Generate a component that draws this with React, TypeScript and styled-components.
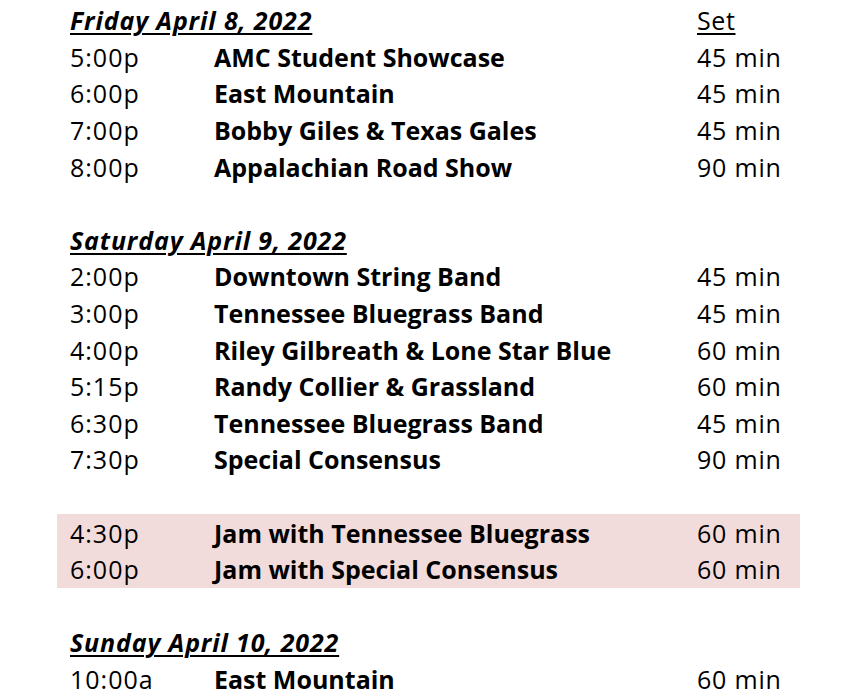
import React from "react"
import styled, { createGlobalStyle } from "styled-components"

const GlobalStyle = createGlobalStyle`
    body {
        margin: 0;
        background: #ffffff;
        font-family: "Open Sans", "Lato", sans-serif;
        color: #000000;
    }
`

const Page = styled.div`
    padding: 2px 50px 0 57px;
    display: flex;
    flex-direction: column;
`

const Row = styled.div<{ $shaded?: boolean }>`
    display: grid;
    grid-template-columns: 144px 483px 1fr;
    width: 743px;
    box-sizing: border-box;
    padding-left: 13px;
    height: 36.6px;
    align-items: center;
    font-size: 25px;
    background-color: ${(p) => (p.$shaded ? "#f2dcdb" : "transparent")};
`

const Heading = styled.span`
    grid-column: 1 / 3;
    font-weight: 700;
    font-style: italic;
    letter-spacing: 0.85px;
    text-decoration: underline;
    text-underline-offset: 3px;
    text-decoration-thickness: 2px;
`

const SetLabel = styled.span`
    letter-spacing: 0.6px;
    text-decoration: underline;
    text-underline-offset: 3px;
    text-decoration-thickness: 2px;
`

const Time = styled.span`
    letter-spacing: 1px;
`

const Band = styled.span`
    font-weight: 700;
`

const Length = styled.span`
    letter-spacing: 0.8px;
`

const Gap = styled.div`
    height: 36.6px;
`

type Slot = [string, string, string]

const friday: Slot[] = [
    ["5:00p", "AMC Student Showcase", "45 min"],
    ["6:00p", "East Mountain", "45 min"],
    ["7:00p", "Bobby Giles & Texas Gales", "45 min"],
    ["8:00p", "Appalachian Road Show", "90 min"],
]

const saturday: Slot[] = [
    ["2:00p", "Downtown String Band", "45 min"],
    ["3:00p", "Tennessee Bluegrass Band", "45 min"],
    ["4:00p", "Riley Gilbreath & Lone Star Blue", "60 min"],
    ["5:15p", "Randy Collier & Grassland", "60 min"],
    ["6:30p", "Tennessee Bluegrass Band", "45 min"],
    ["7:30p", "Special Consensus", "90 min"],
]

const jams: Slot[] = [
    ["4:30p", "Jam with Tennessee Bluegrass", "60 min"],
    ["6:00p", "Jam with Special Consensus", "60 min"],
]

const sunday: Slot[] = [
    ["10:00a", "East Mountain", "60 min"],
]

const Slots = ({ list, shaded }: { list: Slot[]; shaded?: boolean }) => (
    <>
        {list.map(([t, b, l], i) => (
            <Row key={i} $shaded={shaded}>
                <Time>{t}</Time>
                <Band>{b}</Band>
                <Length>{l}</Length>
            </Row>
        ))}
    </>
)

const App = () => {
    return (
        <Page>
            <GlobalStyle />
            <Row>
                <Heading>Friday April 8, 2022</Heading>
                <SetLabel>Set</SetLabel>
            </Row>
            <Slots list={friday} />
            <Gap />
            <Row>
                <Heading>Saturday April 9, 2022</Heading>
            </Row>
            <Slots list={saturday} />
            <Gap />
            <Slots list={jams} shaded />
            <Gap />
            <Row>
                <Heading>Sunday April 10, 2022</Heading>
            </Row>
            <Slots list={sunday} />
        </Page>
    )
}

export default App
